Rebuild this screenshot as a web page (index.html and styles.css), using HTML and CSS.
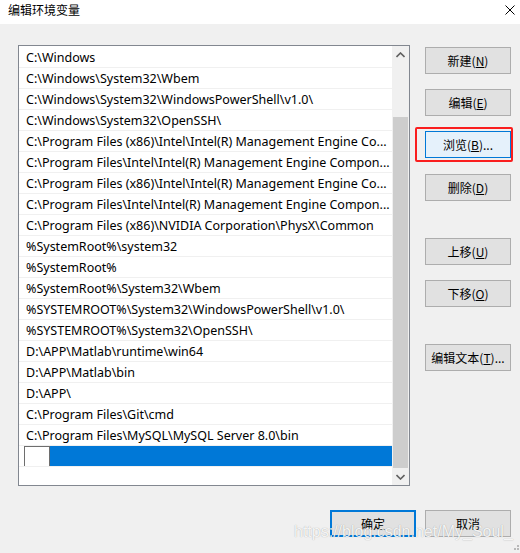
FILE: index.html
```html
<!DOCTYPE html>
<html lang="zh-CN">
<head>
<meta charset="utf-8">
<title>编辑环境变量</title>
<link rel="stylesheet" href="styles.css">
</head>
<body>
<div class="window">
  <div class="titlebar">
    <span class="title">编辑环境变量</span>
    <svg class="close" width="10" height="10" viewBox="0 0 10 10"><path d="M0.5 0.5 L9.5 9.5 M9.5 0.5 L0.5 9.5" stroke="#000" stroke-width="1" fill="none"/></svg>
  </div>
  <div class="content">
    <div class="listbox">
      <div class="rows">
        <div class="row">C:\Windows</div>
        <div class="row">C:\Windows\System32\Wbem</div>
        <div class="row">C:\Windows\System32\WindowsPowerShell\v1.0\</div>
        <div class="row">C:\Windows\System32\OpenSSH\</div>
        <div class="row">C:\Program Files (x86)\Intel\Intel(R) Management Engine Co...</div>
        <div class="row">C:\Program Files\Intel\Intel(R) Management Engine Compon...</div>
        <div class="row">C:\Program Files (x86)\Intel\Intel(R) Management Engine Co...</div>
        <div class="row">C:\Program Files\Intel\Intel(R) Management Engine Compon...</div>
        <div class="row">C:\Program Files (x86)\NVIDIA Corporation\PhysX\Common</div>
        <div class="row">%SystemRoot%\system32</div>
        <div class="row">%SystemRoot%</div>
        <div class="row">%SystemRoot%\System32\Wbem</div>
        <div class="row">%SYSTEMROOT%\System32\WindowsPowerShell\v1.0\</div>
        <div class="row">%SYSTEMROOT%\System32\OpenSSH\</div>
        <div class="row">D:\APP\Matlab\runtime\win64</div>
        <div class="row">D:\APP\Matlab\bin</div>
        <div class="row">D:\APP\</div>
        <div class="row">C:\Program Files\Git\cmd</div>
        <div class="row">C:\Program Files\MySQL\MySQL Server 8.0\bin</div>
        <div class="row row-editing">
          <span class="edit-box"></span>
          <span class="selection"></span>
        </div>
      </div>
      <div class="scrollbar">
        <div class="arrow">
          <svg width="9" height="6" viewBox="0 0 9 6"><path d="M0.5 5 L4.5 1 L8.5 5" stroke="#606060" stroke-width="1.6" fill="none"/></svg>
        </div>
        <div class="track"><div class="thumb"></div></div>
        <div class="arrow">
          <svg width="9" height="6" viewBox="0 0 9 6"><path d="M0.5 1 L4.5 5 L8.5 1" stroke="#606060" stroke-width="1.6" fill="none"/></svg>
        </div>
      </div>
    </div>
    <div class="side">
      <button class="btn">新建(<u>N</u>)</button>
      <button class="btn">编辑(<u>E</u>)</button>
      <button class="btn btn-focus">浏览(<u>B</u>)...</button>
      <button class="btn btn-del">删除(<u>D</u>)</button>
      <button class="btn btn-group">上移(<u>U</u>)</button>
      <button class="btn">下移(<u>O</u>)</button>
      <button class="btn btn-group">编辑文本(<u>T</u>)...</button>
    </div>
  </div>
  <div class="footer">
    <button class="btn btn-default">确定</button>
    <button class="btn">取消</button>
  </div>
  <div class="annotation"></div>
  <div class="watermark">https://blog.csdn.net/My_Soul_</div>
  <svg class="grip" width="7" height="7" viewBox="0 0 7 7">
    <rect x="5" y="0" width="2" height="2" fill="#b8b8b8"/>
    <rect x="2" y="3" width="2" height="2" fill="#b8b8b8"/>
    <rect x="5" y="3" width="2" height="2" fill="#b8b8b8"/>
  </svg>
</div>
</body>
</html>
```

FILE: styles.css
```css
html, body {
  margin: 0;
  padding: 0;
}
body {
  background: #f0f0f0;
  font-family: "Noto Sans", "Noto Sans CJK SC", sans-serif;
  font-size: 12.5px;
  color: #000;
}
.window {
  position: relative;
  width: 520px;
  height: 553px;
  overflow: hidden;
}
.titlebar {
  height: 24px;
  background: #fff;
  display: flex;
  align-items: center;
  justify-content: space-between;
  padding: 0 5px 5px 8px;
  box-sizing: border-box;
}
.title {
  font-family: "Noto Sans CJK SC", sans-serif;
  font-size: 12px;
  line-height: 14px;
}
.close {
  display: block;
}
.content {
  display: flex;
  padding: 21px 0 0 18px;
}
.listbox {
  width: 392px;
  height: 441px;
  box-sizing: border-box;
  border: 1px solid #828790;
  background: #fff;
  display: flex;
}
.rows {
  flex: 1;
  padding-top: 1px;
}
.row {
  height: 20px;
  line-height: 21px;
  border-bottom: 1px solid #f0f0f0;
  padding-left: 7px;
  white-space: nowrap;
  overflow: hidden;
}
.row-editing {
  display: flex;
  padding-left: 5px;
  height: 20px;
}
.edit-box {
  width: 26px;
  height: 21px;
  box-sizing: border-box;
  border: 1px solid #6e6e6e;
  background: #fff;
  flex: none;
}
.selection {
  flex: 1;
  height: 20px;
  background: #0078d7;
}
.scrollbar {
  width: 17px;
  background: #f0f0f0;
  display: flex;
  flex-direction: column;
}
.arrow {
  height: 17px;
  display: flex;
  align-items: center;
  justify-content: center;
}
.track {
  flex: 1;
  padding-top: 54px;
}
.thumb {
  width: 15px;
  height: 351px;
  margin-left: 1px;
  background: #cdcdcd;
}
.side {
  display: flex;
  flex-direction: column;
  margin-left: 15px;
  padding-top: 2px;
  gap: 15px;
}
.btn {
  width: 86px;
  height: 27px;
  box-sizing: border-box;
  border: 1px solid #adadad;
  background: #e1e1e1;
  font-family: "Noto Sans CJK SC", sans-serif;
  font-size: 12px;
  color: #000;
  padding: 0;
  margin: 0;
  line-height: 14px;
}
.btn u {
  text-underline-offset: 1px;
}
.btn-focus {
  border-color: #0078d7;
  background: #e5f1fb;
}
.btn-del {
  margin-top: 1px;
}
.btn-group {
  margin-top: 22px;
}
.btn-default {
  border: 2px solid #0078d7;
}
.footer {
  display: flex;
  justify-content: flex-end;
  gap: 9px;
  padding: 24px 9px 0 0;
}
.annotation {
  position: absolute;
  left: 415px;
  top: 127px;
  width: 98px;
  height: 35px;
  box-sizing: border-box;
  border: 2px solid #fa1e1e;
  border-radius: 2px;
}
.watermark {
  position: absolute;
  left: 294px;
  top: 523px;
  font-family: "Liberation Sans", Arial, sans-serif;
  font-size: 16px;
  line-height: 18px;
  color: rgba(255, 255, 255, 0.9);
  text-shadow: 0 0 1px rgba(0, 0, 0, 0.35);
  white-space: nowrap;
}
.grip {
  position: absolute;
  right: 1px;
  bottom: 1px;
}
```
